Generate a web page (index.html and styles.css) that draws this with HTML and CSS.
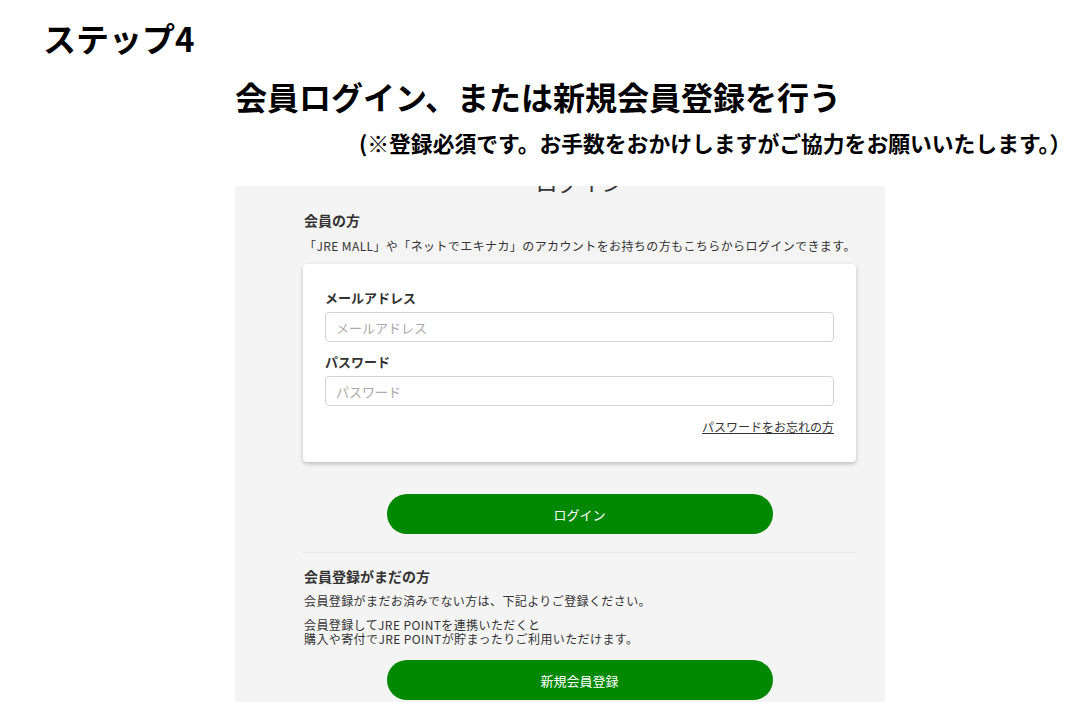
FILE: index.html
```html
<!DOCTYPE html>
<html lang="ja">
<head>
<meta charset="UTF-8">
<meta name="viewport" content="width=device-width, initial-scale=1.0">
<title>ステップ4</title>
<link rel="stylesheet" href="styles.css">
</head>
<body>

<h1 class="step">ステップ4</h1>
<h2 class="title">会員ログイン、または新規会員登録を行う</h2>
<p class="note">(※登録必須です。お手数をおかけしますがご協力をお願いいたします。）</p>

<div class="shot">
    <div class="inner">
        <h3 class="page-head">ログイン</h3>

        <h4 class="sub">会員の方</h4>
        <p class="desc">「JRE MALL」や「ネットでエキナカ」のアカウントをお持ちの方もこちらからログインできます。</p>

        <form class="card">
            <label for="mail">メールアドレス</label>
            <input type="text" id="mail" placeholder="メールアドレス">
            <label for="pass" class="second">パスワード</label>
            <input type="password" id="pass" placeholder="パスワード">
            <div class="forgot"><a href="#">パスワードをお忘れの方</a></div>
        </form>

        <button type="button" class="btn btn-login">ログイン</button>

        <hr class="divider">

        <h4 class="sub sub-reg">会員登録がまだの方</h4>
        <p class="desc desc-reg">会員登録がまだお済みでない方は、下記よりご登録ください。</p>
        <p class="desc desc-point">会員登録してJRE POINTを連携いただくと<br>購入や寄付でJRE POINTが貯まったりご利用いただけます。</p>

        <button type="button" class="btn btn-reg">新規会員登録</button>
    </div>
</div>

</body>
</html>
```

FILE: styles.css
```css
body {
    font-family: "Noto Sans CJK JP", "Noto Sans", sans-serif;
    margin: 0;
    padding: 0;
    color: #000;
    background: #fff;
}
h1, h2, h3, h4, p {
    margin: 0;
}
.step {
    font-size: 33px;
    font-weight: bold;
    line-height: 40px;
    margin: 18px 0 0 43px;
}
.title {
    font-size: 32px;
    font-weight: bold;
    line-height: 40px;
    margin: 18px 0 0 235px;
}
.note {
    font-size: 21.8px;
    font-weight: bold;
    line-height: 30px;
    margin: 12px 0 0 359px;
    white-space: nowrap;
}
.shot {
    width: 650px;
    height: 516px;
    margin: 28px 0 0 235px;
    background: #f4f4f4;
    overflow: hidden;
}
.inner {
    width: 553px;
    margin-left: 68px;
    color: #333;
}
.page-head {
    font-size: 22px;
    font-weight: normal;
    line-height: 24px;
    text-align: center;
    margin-top: -17px;
    color: #333;
}
.sub {
    font-size: 14px;
    font-weight: bold;
    line-height: 20px;
    margin-top: 17px;
    padding-left: 1px;
}
.desc {
    font-size: 12px;
    line-height: 18px;
    letter-spacing: 0.4px;
    margin-top: 7px;
    padding-left: 1px;
    white-space: nowrap;
}
.card {
    display: flex;
    flex-direction: column;
    background: #fff;
    border-radius: 4px;
    box-shadow: 0 2px 4px rgba(0, 0, 0, 0.22);
    margin-top: 9px;
    padding: 24px 22px 26px 22px;
}
.card label {
    font-size: 13px;
    font-weight: bold;
    line-height: 20px;
    margin-bottom: 4px;
}
.card label.second {
    margin-top: 10px;
}
.card input {
    height: 30px;
    box-sizing: border-box;
    border: 1px solid #d2d2d2;
    border-radius: 4px;
    padding: 0 10px;
    font-family: inherit;
    font-size: 13px;
    color: #333;
    background: #fff;
}
.card input::placeholder {
    color: #aaa;
}
.forgot {
    text-align: right;
    font-size: 12px;
    line-height: 18px;
    margin-top: 12px;
}
.forgot a {
    color: #333;
}
.btn {
    display: block;
    width: 386px;
    height: 40px;
    margin: 32px auto 0;
    border: none;
    border-radius: 20px;
    background: #008800;
    color: #fff;
    font-family: inherit;
    font-size: 13px;
    cursor: pointer;
}
.divider {
    border: none;
    border-top: 1px solid #e9e9e9;
    margin: 18px 0 0;
}
.sub-reg {
    margin-top: 13px;
}
.desc-reg {
    margin-top: 6px;
}
.desc-point {
    line-height: 14px;
    margin-top: 8px;
}
.btn-reg {
    margin-top: 14px;
}
```
